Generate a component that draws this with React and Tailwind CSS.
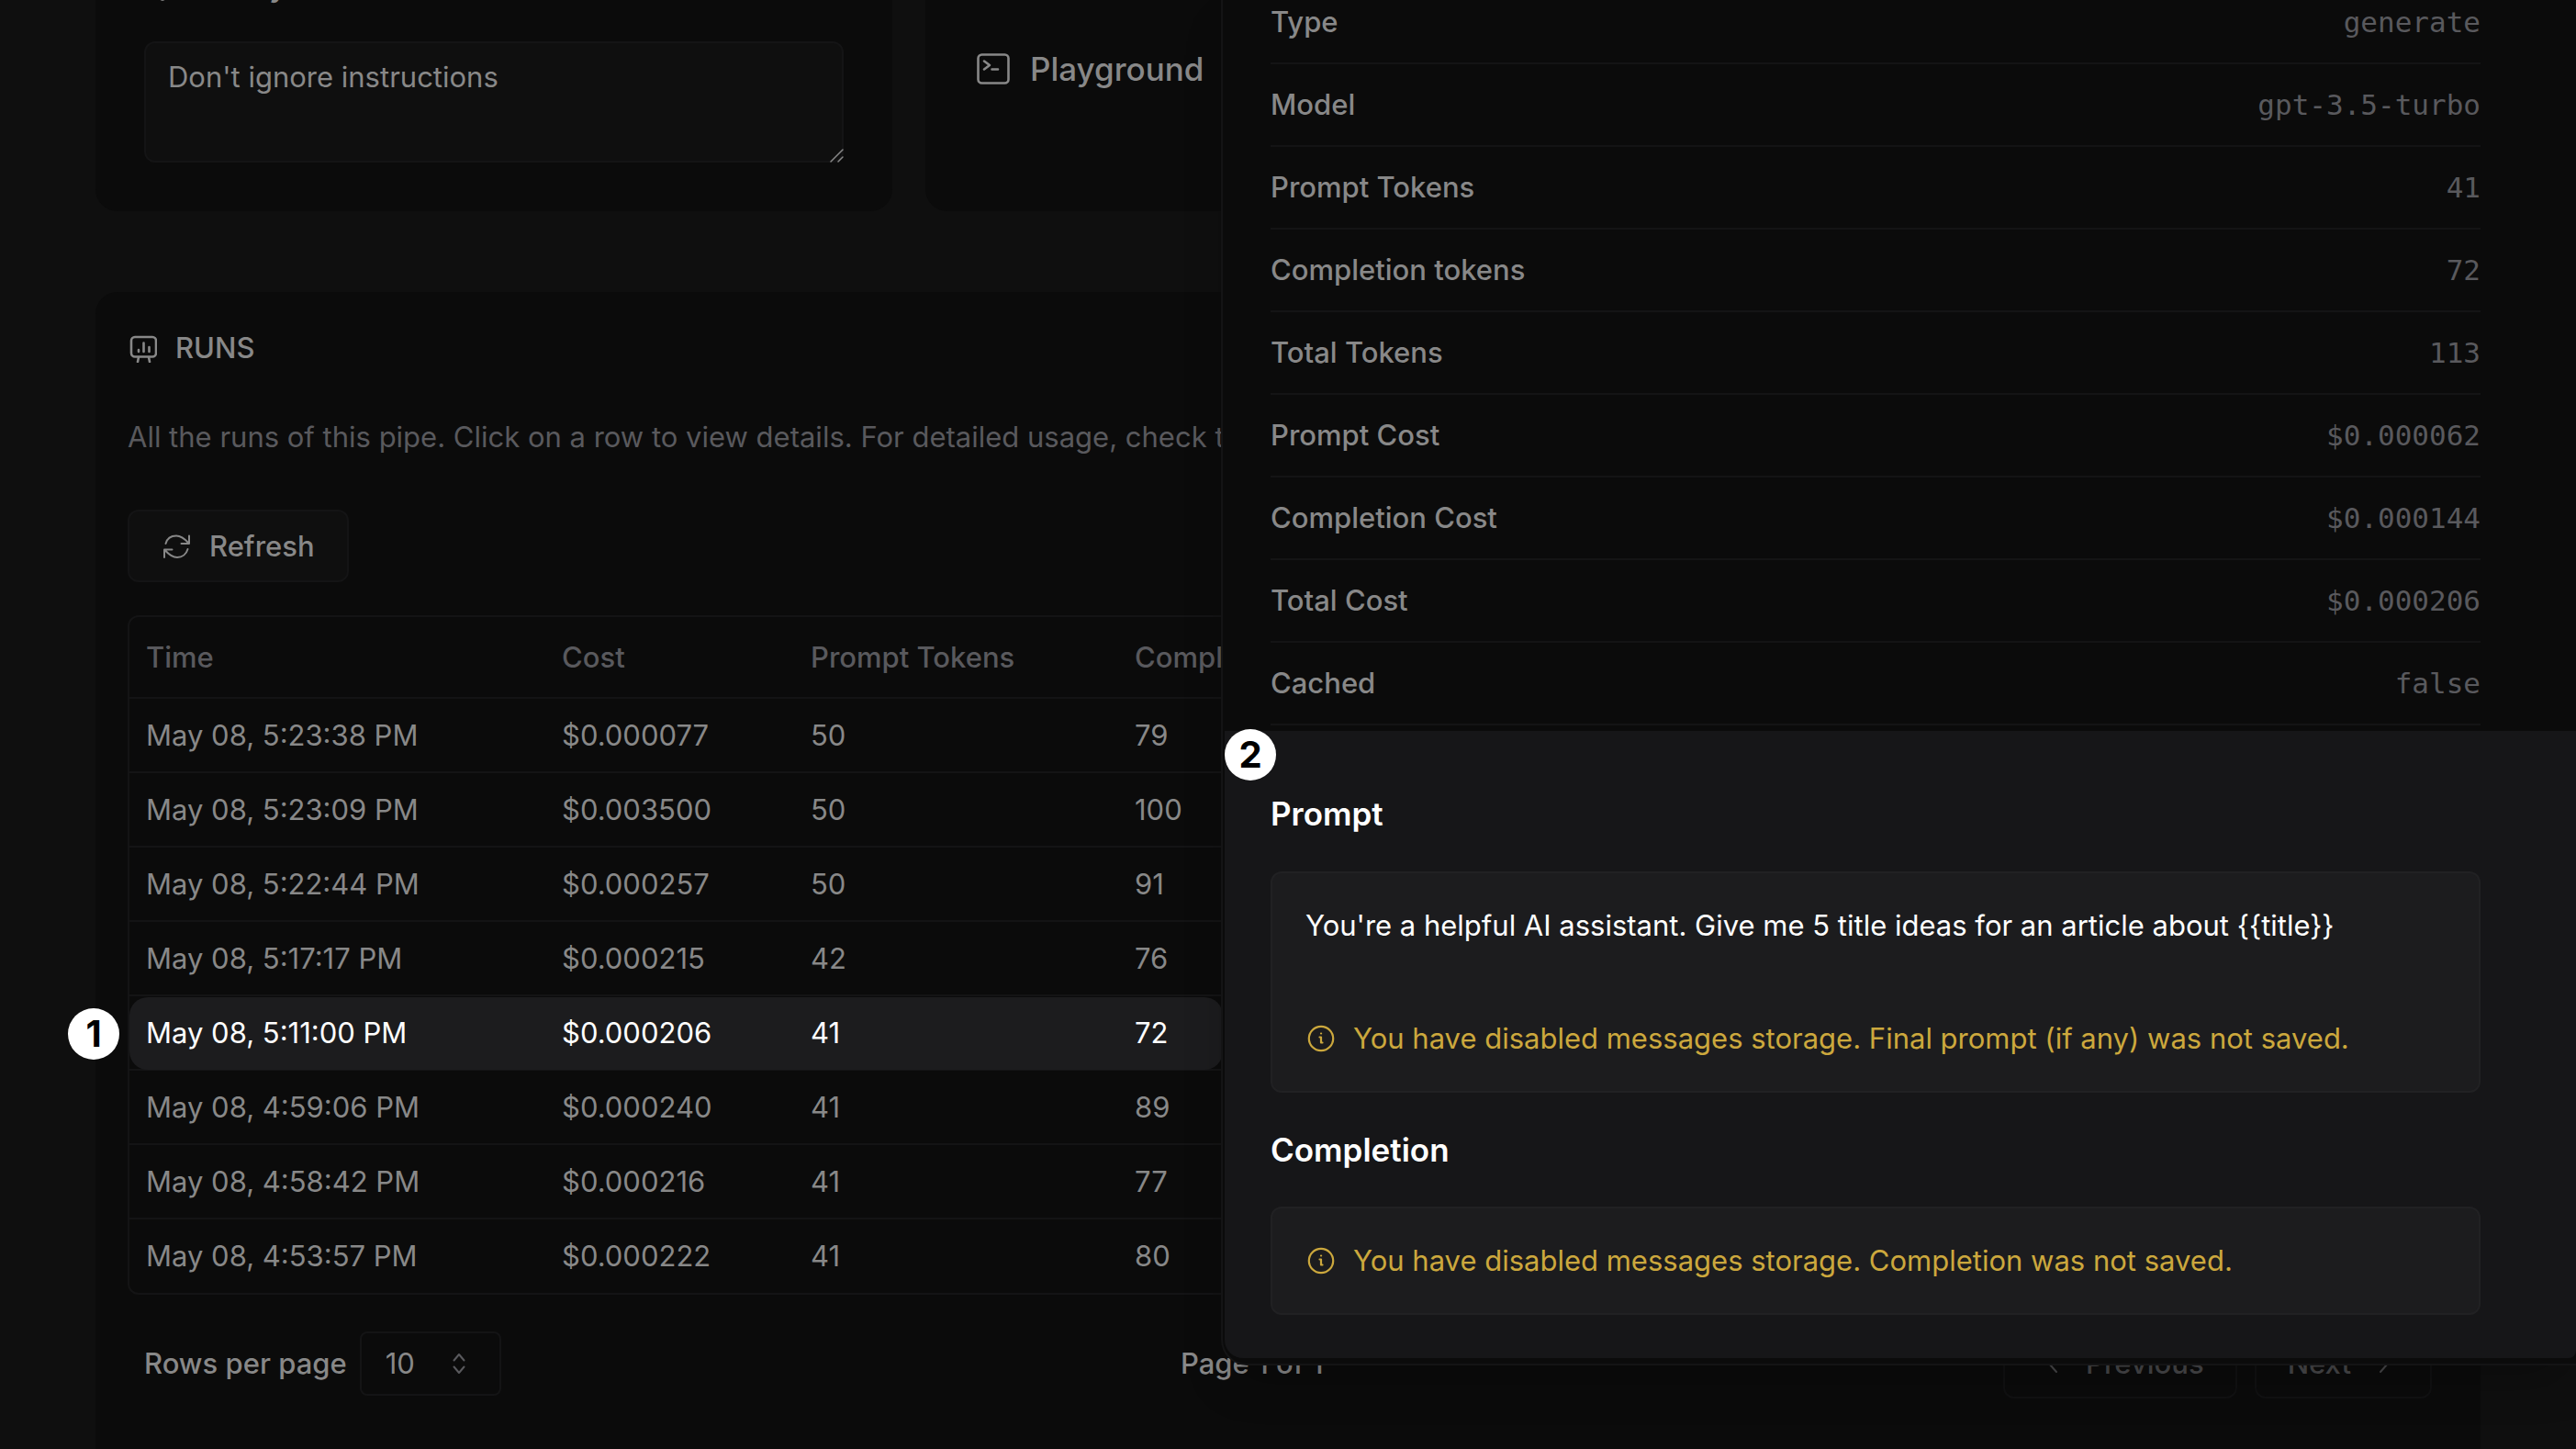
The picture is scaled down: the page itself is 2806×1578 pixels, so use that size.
import React from "react";

const runs = [
  ["May 08, 5:23:38 PM", "$0.000077", "50", "79"],
  ["May 08, 5:23:09 PM", "$0.003500", "50", "100"],
  ["May 08, 5:22:44 PM", "$0.000257", "50", "91"],
  ["May 08, 5:17:17 PM", "$0.000215", "42", "76"],
  ["May 08, 5:11:00 PM", "$0.000206", "41", "72"],
  ["May 08, 4:59:06 PM", "$0.000240", "41", "89"],
  ["May 08, 4:58:42 PM", "$0.000216", "41", "77"],
  ["May 08, 4:53:57 PM", "$0.000222", "41", "80"],
];
const activeRun = 4;

const details = [
  ["Type", "generate"],
  ["Model", "gpt-3.5-turbo"],
  ["Prompt Tokens", "41"],
  ["Completion tokens", "72"],
  ["Total Tokens", "113"],
  ["Prompt Cost", "$0.000062"],
  ["Completion Cost", "$0.000144"],
  ["Total Cost", "$0.000206"],
  ["Cached", "false"],
];

function Icon({ className, children, box = "0 0 32 32", width = 2 }) {
  return (
    <svg viewBox={box} className={className} fill="none" stroke="currentColor" strokeWidth={width} strokeLinecap="round" strokeLinejoin="round" aria-hidden="true">
      {children}
    </svg>
  );
}

function TerminalIcon() {
  return (
    <Icon className="size-9 shrink-0" box="0 0 36 36" width={2.6}>
      <rect x="1.5" y="2.500" width="33" height="31" rx="4" />
      <path d="M8 9.500l6 4.500-6 4.500M16.500 18.500h6.500" />
    </Icon>
  );
}

function ShieldIcon() {
  return (
    <Icon className="size-9 shrink-0" box="0 0 36 36" width={3}>
      <path d="M20 2l13 5v9c0 9-5 15-13 18.500C12 31 7 25 7 16V7z" />
    </Icon>
  );
}

function BoardIcon() {
  return (
    <Icon className="size-8 shrink-0" width={2.6}>
      <rect x="4" y="4" width="27" height="21.500" rx="4" />
      <path d="M12 26l-1 5M23 26l1 5M12 18v2M17.500 10.500v9.500M23.500 15v5" />
    </Icon>
  );
}

function RefreshIcon() {
  return (
    <Icon className="size-8 shrink-0">
      <path d="M4.500 13C6 7.500 10.500 4.500 16 4.500c5.500 0 9 3 13.500 8M30 4.500v8.500h-8.500M28.500 19c-1.500 5.500-6 9-11.500 9-5.500 0-9-3-13.500-8M3 28v-8.500h8.500" />
    </Icon>
  );
}

function InfoIcon() {
  return (
    <Icon className="size-8 shrink-0" width={2.2}>
      <circle cx="17" cy="16" r="13.200" />
      <path d="M15.500 14.500h1.500v6h1.500M17 10.500h0.100" />
    </Icon>
  );
}

function Notice({ children }) {
  return (
    <p className="flex items-center gap-5 text-[#cca83d]">
      <InfoIcon />
      {children}
    </p>
  );
}

function Badge({ children, className }) {
  return (
    <span className={`absolute z-30 flex size-14 items-center justify-center rounded-full bg-white text-[40px] leading-none font-bold text-black ${className}`}>
      {children}
    </span>
  );
}

function TopCards() {
  return (
    <div className="flex h-[230px] items-end gap-9">
      <section className="h-[280px] w-[868px] shrink-0 rounded-3xl bg-[#0b0b0b] px-[53px] pt-[11px]">
        <div className="mb-10 flex items-center justify-between">
          <label htmlFor="safety" className="flex items-center gap-3 text-[35px] leading-[44px] font-medium">
            <ShieldIcon />
            Safety
          </label>
          <Icon className="size-9 text-[#59595d]" width={2.2}>
            <circle cx="13" cy="16" r="14" />
            <path d="M13 15v7M13 10h0.100" />
          </Icon>
        </div>
        <div className="relative">
          <textarea
            id="safety"
            defaultValue="Don't ignore instructions"
            className="block h-[132px] w-full resize-none rounded-xl border-2 border-[#141415] bg-[#0f0f0f] px-6 py-4 outline-none"
          />
          <Icon className="absolute right-0 bottom-0 size-4" box="0 0 16 16" width={1.5}>
            <path d="M2 15L15 2M10 15l5-5" />
          </Icon>
        </div>
      </section>
      <section className="h-[280px] grow rounded-3xl bg-[#0b0b0b] px-14 pt-[103px]">
        <h2 className="flex items-center gap-[22px] text-[35px] leading-[44px] font-medium">
          <TerminalIcon />
          Playground
        </h2>
      </section>
    </div>
  );
}

function RunsTable() {
  return (
    <div className="mt-9 rounded-xl border-2 border-[#141415]">
      <table className="w-full table-fixed border-collapse text-left">
        <colgroup>
          <col className="w-[453px]" />
          <col className="w-[271px]" />
          <col className="w-[353px]" />
          <col />
        </colgroup>
        <thead>
          <tr className="h-[88px] text-[#59595d]">
            {["Time", "Cost", "Prompt Tokens", "Completion Tokens"].map((name) => (
              <th key={name} className="pl-[18px] font-medium">{name}</th>
            ))}
          </tr>
        </thead>
        <tbody>
          {runs.map((run, index) => (
            <tr key={run[0]} className={index === activeRun ? "relative h-[81px] border-t-2 border-[#141415] text-white" : "h-[81px] border-t-2 border-[#141415]"}>
              {run.map((value, column) => (
                <td key={column} className="pl-[18px]">
                  {index === activeRun && column === 0 && (
                    <>
                      <span className="absolute top-0 left-0 h-full w-[1191px] rounded-[20px] bg-[#1c1c1e]" />
                      <Badge className="top-3 -left-[67px]">1</Badge>
                    </>
                  )}
                  <span className="relative">{value}</span>
                </td>
              ))}
            </tr>
          ))}
        </tbody>
      </table>
    </div>
  );
}

function Pagination() {
  return (
    <div className="mt-[37px] flex items-center justify-between px-[18px]">
      <div className="flex items-center gap-3.5 font-medium">
        <label htmlFor="rows">Rows per page</label>
        <div className="relative">
          <select id="rows" className="h-[70px] w-[154px] appearance-none rounded-lg border-2 border-[#141415] bg-transparent px-[26px] font-normal">
            <option>10</option>
          </select>
          <Icon className="pointer-events-none absolute top-[19px] right-[38px] h-8 w-4 text-[#59595d]" box="0 0 16 32">
            <path d="M2.500 12.500l5.500-6.500 5.500 6.500M2.500 19.500l5.500 6.500 5.500-6.500" />
          </Icon>
        </div>
      </div>
      <p className="font-medium">Page 1 of 1</p>
      <div className="flex gap-[19px] font-medium text-[#48484a]">
        <button disabled className="flex h-[76px] items-center gap-6 rounded-xl border-2 border-[#111112] pr-[34px] pl-10">
          <Icon className="size-6" box="0 0 24 24"><path d="M16 3l-8 9 8 9" /></Icon>
          Previous
        </button>
        <button disabled className="flex h-[76px] items-center gap-6 rounded-xl border-2 border-[#111112] pr-[38px] pl-[34px]">
          Next
          <Icon className="size-6" box="0 0 24 24"><path d="M8 3l8 9-8 9" /></Icon>
        </button>
      </div>
    </div>
  );
}

function RunDrawer() {
  return (
    <aside className="absolute top-0 right-0 left-[1330px] z-20 flex h-[1487px] flex-col justify-end overflow-hidden rounded-bl-[28px] border-b-2 border-l-2 border-[#141415] bg-[#0b0b0b] pb-1.5 pl-0.5 shadow-2xl">
      <dl className="mb-1.5 pr-[104px] pl-[50px]">
        {details.map(([name, value]) => (
          <div key={name} className="flex h-[90px] items-center justify-between border-b-2 border-[#141415]">
            <dt className="font-medium">{name}</dt>
            <dd className="font-['DejaVu_Sans_Mono',monospace] text-[#59595d]">{value}</dd>
          </div>
        ))}
      </dl>
      <div className="relative rounded-br-lg rounded-bl-[20px] bg-[#161618] pt-[68px] pr-[104px] pb-[47px] pl-[50px] text-white">
        <Badge className="-top-0.5 left-0">2</Badge>
        <h3 className="text-[35px] leading-[44px] font-semibold">Prompt</h3>
        <div className="mt-[41px] flex flex-col gap-[81px] rounded-xl border-2 border-[#212123] bg-[#1c1c1e] px-9 py-9">
          <p>You're a helpful AI assistant. Give me 5 title ideas for an article about {"{{title}}"}</p>
          <Notice>You have disabled messages storage. Final prompt (if any) was not saved.</Notice>
        </div>
        <h3 className="mt-10 text-[35px] leading-[44px] font-semibold">Completion</h3>
        <div className="mt-10 rounded-xl border-2 border-[#212123] bg-[#1c1c1e] px-9 py-9">
          <Notice>You have disabled messages storage. Completion was not saved.</Notice>
        </div>
      </div>
    </aside>
  );
}

export default function App() {
  return (
    <div className="relative h-screen overflow-hidden bg-[#0f0f0f] font-['Inter',sans-serif] text-[31px] leading-[42px] text-[#888888]">
      <main className="px-[104px]">
        <TopCards />
        <section className="mt-[88px] h-[1300px] rounded-3xl bg-[#0b0b0b] px-[35px] pt-10">
          <h2 className="flex items-center gap-5 font-medium">
            <BoardIcon />
            RUNS
          </h2>
          <p className="mt-[55px] text-[#59595d]">
            All the runs of this pipe. Click on a row to view details. For detailed usage, check the usage page.
          </p>
          <button className="mt-[58px] flex h-[79px] items-center gap-5 rounded-xl border-2 border-[#141415] bg-[#0f0f0f] px-[35px] font-medium">
            <RefreshIcon />
            Refresh
          </button>
          <RunsTable />
          <Pagination />
        </section>
      </main>
      <RunDrawer />
    </div>
  );
}
